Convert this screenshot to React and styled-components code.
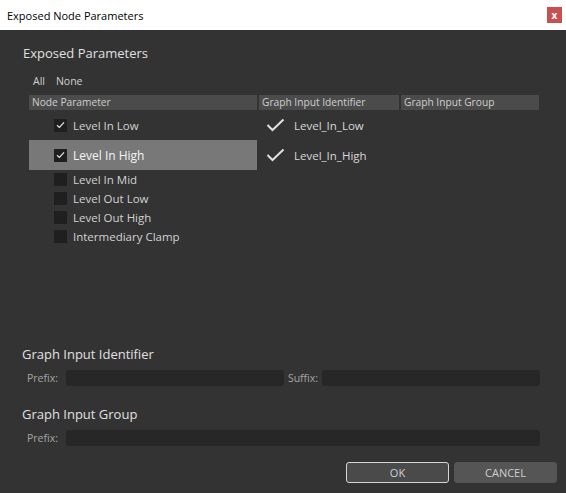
import React from "react";
import styled, { createGlobalStyle } from "styled-components";

const GlobalStyle = createGlobalStyle`
  html, body { margin: 0; padding: 0; background: #333333; }
  body { font-family: "Open Sans", "Noto Sans", sans-serif; }
  * { box-sizing: border-box; }
`;

const Window = styled.div`
  width: 566px;
  height: 493px;
  display: flex;
  flex-direction: column;
  background: #333333;
  overflow: hidden;
`;

const TitleBar = styled.div`
  height: 30px;
  flex: none;
  background: #ffffff;
  display: flex;
  align-items: center;
  justify-content: space-between;
  padding: 0 4px 0 7px;
`;

const TitleText = styled.span`
  font-size: 11px;
  color: #000;
`;

const CloseButton = styled.div`
  width: 15px;
  height: 16px;
  margin-top: -1px;
  background: #c75050;
  color: #fff;
  font-size: 10px;
  font-weight: 700;
  display: flex;
  align-items: center;
  justify-content: center;
  line-height: 1;
`;

const Body = styled.div`
  flex: 1;
  display: flex;
  flex-direction: column;
  padding: 14px 27px 0 22px;
`;

const SectionTitle = styled.div`
  font-size: 13px;
  line-height: 18px;
  color: #e0e0e0;
  margin-left: ${(p) => p.$indent || 0}px;
`;

const SelectLinks = styled.div`
  margin-top: 12px;
  padding-left: 11px;
  display: flex;
  gap: 11px;
  font-size: 10.5px;
  line-height: 14px;
  color: #d0d0d0;
`;

const Table = styled.div`
  margin: 7px 0 0 7px;
  height: 240px;
  display: flex;
  flex-direction: column;
`;

const Grid = styled.div`
  display: grid;
  grid-template-columns: 228px 140px 1fr;
  column-gap: 2px;
`;

const HeaderCell = styled.div`
  height: 15px;
  background: #4b4b4b;
  font-size: 10.2px;
  line-height: 15px;
  color: #cfcfcf;
  padding-left: 3px;
  white-space: nowrap;
`;

const Row = styled(Grid)`
  height: ${(p) => (p.$tall ? 30 : 19)}px;
`;

const ParamCell = styled.div`
  display: flex;
  align-items: center;
  gap: 6px;
  padding-left: 25px;
  background: ${(p) => (p.$selected ? "#787878" : "transparent")};
  color: ${(p) => (p.$selected ? "#f4f4f4" : "#d2d2d2")};
  font-size: ${(p) => (p.$selected ? 12 : 11.5)}px;
  white-space: nowrap;
`;

const CheckBox = styled.div`
  width: 13px;
  height: 13px;
  flex: none;
  background: #1f1f1f;
  display: flex;
  align-items: center;
  justify-content: center;
`;

const IdentCell = styled.div`
  display: flex;
  align-items: center;
  gap: 9px;
  padding-left: 7px;
  color: #d8d8d8;
  font-size: 11.5px;
  white-space: nowrap;
`;

const SubTitle = styled(SectionTitle)`
  margin-top: ${(p) => p.$top}px;
`;

const FieldRow = styled.div`
  margin-top: 7px;
  display: grid;
  grid-template-columns: ${(p) => (p.$double ? "auto 1fr auto 1fr" : "auto 1fr")};
  column-gap: 4px;
  align-items: center;
  padding-left: 5px;
  height: 16px;
  margin-right: -1px;
`;

const FieldLabel = styled.span`
  font-size: 10.5px;
  color: #a6a6a6;
  padding-right: ${(p) => p.$pad || 0}px;
`;

const Input = styled.div`
  height: 16px;
  background: #272727;
  border-radius: 3px;
`;

const Footer = styled.div`
  margin-top: 16px;
  margin-right: -18px;
  display: flex;
  justify-content: flex-end;
  gap: 5px;
`;

const Button = styled.div`
  width: 103px;
  height: 21px;
  border-radius: 3px;
  background: ${(p) => (p.$primary ? "#4a4a4a" : "#555555")};
  border: 1px solid ${(p) => (p.$primary ? "#d6d6d6" : "#555555")};
  color: #cfcfcf;
  font-size: 11px;
  display: flex;
  align-items: center;
  justify-content: center;
`;

const SmallCheck = () => (
  <svg width="9" height="8" viewBox="0 0 9 8">
    <path d="M1 4.2 L3.4 6.4 L8 1.4" fill="none" stroke="#e8e8e8" strokeWidth="1.2" />
  </svg>
);

const BigCheck = () => (
  <svg width="19" height="14" viewBox="0 0 19 14">
    <path d="M1.5 7 L6.5 12 L17.5 1.5" fill="none" stroke="#e0e0e0" strokeWidth="2" />
  </svg>
);

const params = [
  { name: "Level In Low", checked: true, id: "Level_In_Low" },
  { name: "Level In High", checked: true, id: "Level_In_High", selected: true },
  { name: "Level In Mid" },
  { name: "Level Out Low" },
  { name: "Level Out High" },
  { name: "Intermediary Clamp" },
];

export default function App() {
  return (
    <>
      <GlobalStyle />
      <Window>
        <TitleBar>
          <TitleText>Exposed Node Parameters</TitleText>
          <CloseButton>x</CloseButton>
        </TitleBar>
        <Body>
          <SectionTitle $indent={1}>Exposed Parameters</SectionTitle>
          <SelectLinks>
            <span>All</span>
            <span>None</span>
          </SelectLinks>
          <Table>
            <Grid>
              <HeaderCell>Node Parameter</HeaderCell>
              <HeaderCell>Graph Input Identifier</HeaderCell>
              <HeaderCell>Graph Input Group</HeaderCell>
            </Grid>
            {params.map((p) => (
              <Row key={p.name} $tall={p.checked}>
                <ParamCell $selected={p.selected}>
                  <CheckBox>{p.checked && <SmallCheck />}</CheckBox>
                  {p.name}
                </ParamCell>
                <IdentCell>
                  {p.checked && (
                    <>
                      <BigCheck />
                      {p.id}
                    </>
                  )}
                </IdentCell>
                <div />
              </Row>
            ))}
          </Table>
          <SubTitle $top={10}>Graph Input Identifier</SubTitle>
          <FieldRow $double>
            <FieldLabel $pad={4}>Prefix:</FieldLabel>
            <Input />
            <FieldLabel>Suffix:</FieldLabel>
            <Input />
          </FieldRow>
          <SubTitle $top={19}>Graph Input Group</SubTitle>
          <FieldRow>
            <FieldLabel $pad={4}>Prefix:</FieldLabel>
            <Input />
          </FieldRow>
          <Footer>
            <Button $primary>OK</Button>
            <Button>CANCEL</Button>
          </Footer>
        </Body>
      </Window>
    </>
  );
}
